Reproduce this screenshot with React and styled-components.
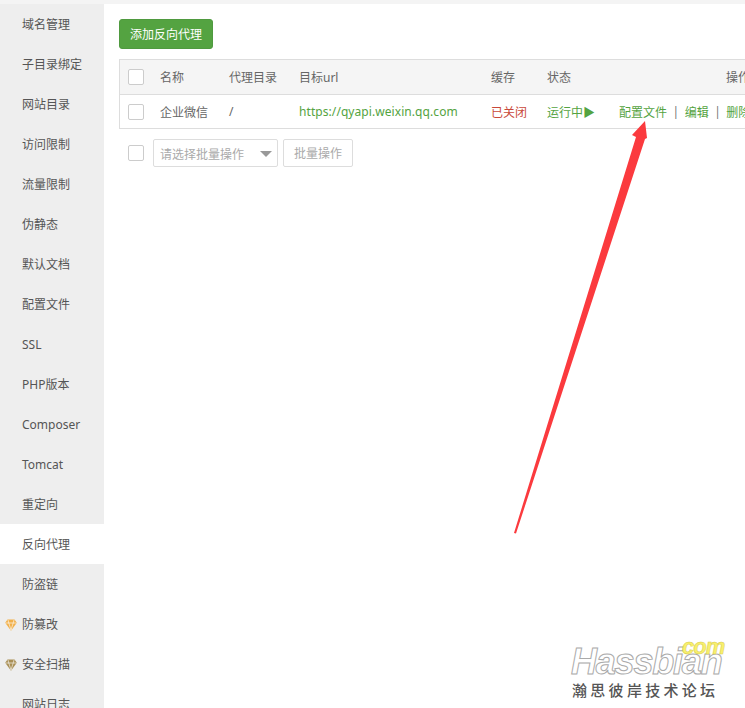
import React from "react";
import styled, { createGlobalStyle } from "styled-components";

const Global = createGlobalStyle`
  html, body { margin: 0; padding: 0; background: #fff; height: 100%; overflow: hidden; }
  body { font-family: "Noto Sans", "Noto Sans CJK SC", sans-serif; font-size: 12px; color: #666; }
`;
const Page = styled.div`
  position: relative; width: 745px; height: 708px; overflow: hidden;
  border-top: 4px solid #f4f4f4; box-sizing: border-box; display: flex;
`;
const Side = styled.nav`
  width: 104px; flex: none; background: #eee; height: 704px; overflow: hidden;
`;
const SideItem = styled.div`
  position: relative; height: 40px; line-height: 42px; padding-left: 22px; color: #555;
  font-size: 12px; white-space: nowrap;
  background: ${p => (p.$active ? "#fff" : "transparent")};
`;
const Gem = styled.svg`
  position: absolute; left: 5px; top: 15px; width: 12px; height: 12px;
`;
const Main = styled.main`
  flex: none; width: 641px; padding: 15px 0 0 15px; box-sizing: border-box;
`;
const AddButton = styled.button`
  display: block; width: 94px; height: 30px; padding: 0; border: 1px solid #4f9a3f; border-radius: 3px;
  background: #54a341; color: #fff; font: inherit; font-size: 12px; line-height: 30px;
`;
const Table = styled.div`
  width: 660px; margin-top: 10px; border: 1px solid #ddd; border-right: 0; box-sizing: border-box;
`;
const Row = styled.div`
  display: grid; grid-template-columns: 40px 69px 70px 192px 56px 72px 1fr;
  align-items: center; box-sizing: border-box; height: ${p => (p.$head ? "35px" : "33px")};
  background: ${p => (p.$head ? "#f5f5f5" : "#fff")};
  border-bottom: ${p => (p.$head ? "1px solid #ddd" : "0")};
  white-space: nowrap;
`;
const Check = styled.span`
  display: block; width: 14px; height: 14px; border: 1px solid #ccc; border-radius: 2px; background: #fff;
  margin-left: ${p => p.$ml || 8}px;
`;
const Cell = styled.span`
  color: ${p => p.$color || "#666"};
  font-size: 12px;
  letter-spacing: ${p => p.$ls || "0"};
`;
const Ops = styled.span`
  display: flex; align-items: center; color: #54a341; font-size: 12px;
  i { font-style: normal; color: #777; margin: 0 5.5px; }
`;
const OpsHead = styled.span`
  padding-left: 107px; color: #666;
`;
const Batch = styled.div`
  display: flex; align-items: center; margin-top: 10px; height: 28px;
`;
const Select = styled.div`
  display: flex; align-items: center; justify-content: space-between; box-sizing: border-box;
  width: 125px; height: 28px; margin-left: 9px; padding: 1px 5px 0 6px;
  border: 1px solid #ddd; border-radius: 2px; color: #aaa; font-size: 12px;
`;
const Caret = styled.span`
  width: 0; height: 0; border-left: 6px solid transparent; border-right: 6px solid transparent;
  border-top: 6px solid #999;
`;
const BatchBtn = styled.div`
  box-sizing: border-box; width: 70px; height: 28px; line-height: 28px; margin-left: 5px; text-align: center;
  border: 1px solid #ddd; border-radius: 2px; color: #aaa; font-size: 12px;
`;
const Arrow = styled.svg`
  position: absolute; left: 505px; top: 112px; width: 150px; height: 425px; pointer-events: none;
`;
const Mark = styled.div`
  position: absolute; left: 570px; top: 632px; width: 170px; height: 70px; pointer-events: none;
`;
const MarkName = styled.div`
  position: absolute; left: 1px; top: 8px; font: italic 700 36px/36px "Liberation Sans", sans-serif;
  color: #fff; -webkit-text-stroke: 1px #aaa; letter-spacing: -1.2px; white-space: nowrap;
`;
const MarkCom = styled.div`
  position: absolute; left: 112px; top: 0; font: italic 700 22px/22px "Liberation Sans", sans-serif;
  color: #f8f06c; -webkit-text-stroke: 0.5px #d8cc50; letter-spacing: -1px;
`;
const MarkCn = styled.div`
  position: absolute; left: 2px; top: 44px; font: 500 15px/20px "Noto Sans CJK SC", sans-serif;
  color: #555; letter-spacing: 3.3px; white-space: nowrap;
`;

const items = ["域名管理","子目录绑定","网站目录","访问限制","流量限制","伪静态","默认文档","配置文件","SSL","PHP版本","Composer","Tomcat","重定向","反向代理","防盗链","防篡改","安全扫描","网站日志"];

const GemIcon = ({ dim }) => (
  <Gem viewBox="0 0 12 12">
    <path d="M2.5 0.5h7l2.3 3.2L6 11.8 0.2 3.7z" fill={dim ? "#a98f55" : "#f1b04a"} />
    <path d="M0.6 4h10.8M3.8 4L6 11M8.2 4L6 11M3 1L3.8 4M9 1L8.2 4" stroke="#fff" strokeWidth="0.6" fill="none" />
  </Gem>
);

export default function App() {
  return (
    <>
      <Global />
      <Page>
        <Side>
          {items.map(t => (
            <SideItem key={t} $active={t === "反向代理"}>
              {t === "防篡改" && <GemIcon />}
              {t === "安全扫描" && <GemIcon dim />}
              {t}
            </SideItem>
          ))}
        </Side>
        <Main>
          <AddButton>添加反向代理</AddButton>
          <Table>
            <Row $head>
              <Check />
              <Cell>名称</Cell>
              <Cell>代理目录</Cell>
              <Cell>目标url</Cell>
              <Cell>缓存</Cell>
              <Cell>状态</Cell>
              <OpsHead>操作</OpsHead>
            </Row>
            <Row>
              <Check />
              <Cell>企业微信</Cell>
              <Cell>/</Cell>
              <Cell $color="#54a341" $ls="0.07px">https://qyapi.weixin.qq.com</Cell>
              <Cell $color="#c9483a">已关闭</Cell>
              <Cell $color="#54a341">运行中▶</Cell>
              <Ops>配置文件<i>|</i>编辑<i>|</i>删除</Ops>
            </Row>
          </Table>
          <Batch>
            <Check $ml={9} />
            <Select>请选择批量操作<Caret /></Select>
            <BatchBtn>批量操作</BatchBtn>
          </Batch>
        </Main>
        <Arrow viewBox="0 0 150 425">
          <path d="M9 417L131 21L127 19L140 5L142 22L140 23L11 417.5z" fill="#fb3a3e" />
        </Arrow>
        <Mark>
          <MarkName>Hassbian</MarkName>
          <MarkCom>com</MarkCom>
          <MarkCn>瀚思彼岸技术论坛</MarkCn>
        </Mark>
      </Page>
    </>
  );
}
